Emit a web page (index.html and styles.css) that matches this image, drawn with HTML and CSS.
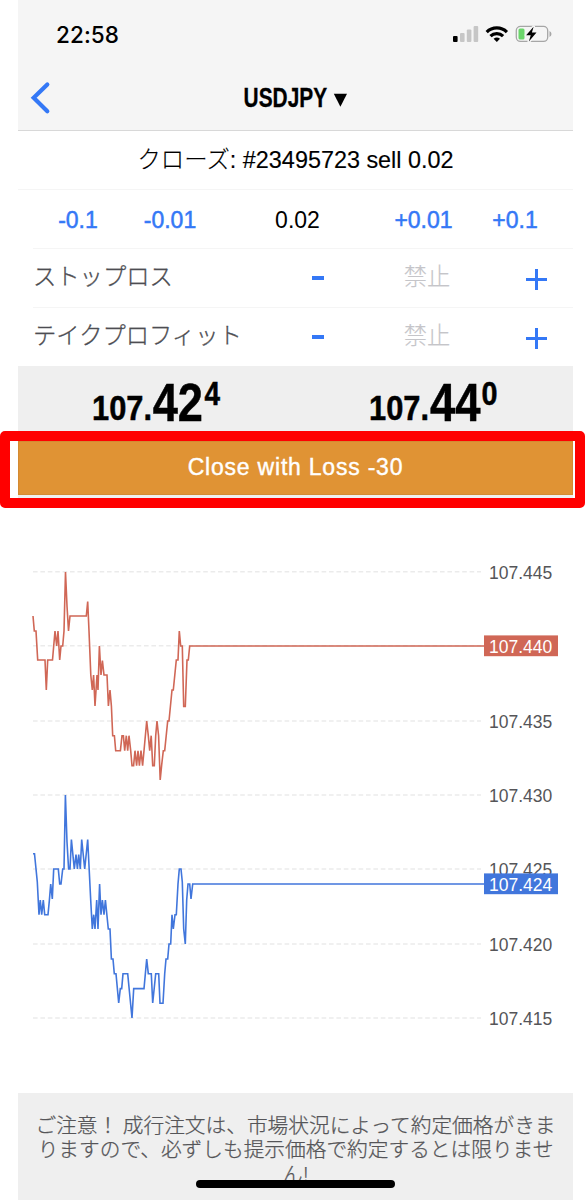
FILE: index.html
```html
<!DOCTYPE html>
<html lang="ja">
<head>
<meta charset="utf-8">
<title>USDJPY</title>
<link rel="stylesheet" href="styles.css">
</head>
<body>
<main class="screen">
  <header class="header">
    <div class="status">
      <span class="time">22:58</span>
      <svg class="status-icons" width="102" height="20" viewBox="450 24 102 20">
        <rect x="453" y="36" width="4.6" height="6" rx="1"/>
        <g fill="#c6c6c6"><rect x="460" y="33" width="4.6" height="9" rx="1"/><rect x="466.8" y="29.6" width="4.6" height="12.4" rx="1"/><rect x="473.6" y="26" width="4.6" height="16" rx="1"/></g>
        <g fill="none" stroke="#000" stroke-width="3.2"><path d="M486.7 32.1a14.3 14.3 0 0 1 20.2 0"/><path d="M490.5 36.2a8.9 8.9 0 0 1 12.6 0"/></g>
        <path d="M493.6 38.8a5.3 5.3 0 0 1 6.4 0l-3.2 3.1z"/>
        <rect x="516.3" y="26.4" width="31.4" height="15" rx="4.2" fill="none" stroke="#a6a6a6" stroke-width="1.3"/>
        <path d="M549.5 31v6q2-1 2-3t-2-3z" fill="#a6a6a6"/>
        <rect x="518.5" y="28.6" width="6" height="10.8" rx="1.5" fill="#6bd66b"/>
        <path d="M533.6 26.8l-7.5 8.4h4.6l-1.8 6.2 7.6-8.8h-4.6z" fill="#000" stroke="#f5f5f5" stroke-width="3" paint-order="stroke" stroke-linejoin="round"/>
      </svg>
    </div>
    <div class="nav">
      <svg class="back" width="24" height="36" viewBox="28 80 24 36"><path d="M47.3 84.5L33.7 97.8 47.3 111.2" fill="none" stroke="#3478f6" stroke-width="4.2" stroke-linecap="round"/></svg>
      <svg class="title" width="110" height="36" viewBox="241 80 110 36">
        <text x="243.6" y="107.4" font-size="27" textLength="83.5" lengthAdjust="spacingAndGlyphs">USDJPY</text>
        <path d="M333.8 93.7h13.2l-6.6 13z"/>
      </svg>
    </div>
  </header>

  <div class="order">クローズ: #23495723 sell 0.02</div>
  <div class="volume">
    <span class="step">-0.1</span><span class="step">-0.01</span><span class="amount">0.02</span><span class="step">+0.01</span><span class="step">+0.1</span>
  </div>
  <div class="level">
    <span class="label">ストップロス</span>
    <i class="minus"></i><span class="value">禁止</span><i class="plus"></i>
  </div>
  <div class="level">
    <span class="label">テイクプロフィット</span>
    <i class="minus"></i><span class="value">禁止</span><i class="plus"></i>
  </div>

  <section class="trade">
    <svg class="prices" width="555" height="75" viewBox="18 366 555 75">
      <g>
        <text x="92" y="420" font-size="35" textLength="60" lengthAdjust="spacingAndGlyphs">107.</text>
        <text x="152.7" y="420.7" font-size="54" textLength="50.3" lengthAdjust="spacingAndGlyphs">42</text>
        <text x="204.5" y="405.3" font-size="33" textLength="15.5" lengthAdjust="spacingAndGlyphs">4</text>
      </g>
      <g>
        <text x="369" y="420" font-size="35" textLength="60" lengthAdjust="spacingAndGlyphs">107.</text>
        <text x="430" y="420.7" font-size="54" textLength="50.5" lengthAdjust="spacingAndGlyphs">44</text>
        <text x="481.5" y="405.3" font-size="33" textLength="16" lengthAdjust="spacingAndGlyphs">0</text>
      </g>
    </svg>
    <div class="close">Close with Loss -30</div>
    <div class="highlight"></div>
  </section>

  <svg class="chart" width="555" height="595" viewBox="18 498 555 595">
    <path class="grid" d="M33 571.7H481M33 645.8H481M33 721H481M33 795H481M33 869H481M33 944H481M33 1018H481"/>
    <g class="axis">
      <text x="489" y="579">107.445</text>
      <text x="489" y="728">107.435</text>
      <text x="489" y="802">107.430</text>
      <text x="489" y="876">107.425</text>
      <text x="489" y="951">107.420</text>
      <text x="489" y="1025">107.415</text>
    </g>
    <polyline class="line ask" points="33,616 34.3,631 36,631 37.7,660 45,660 46.3,690 47.7,660 52.5,660 55,631 56.7,646 58,631 59.7,660 61,646 62.7,646 64,631 65.5,572 67,606 68.5,631 70,616 86.3,616 87.7,601.5 89,631 90.8,675 92.3,690 93.6,675 95,706 97,675 98,690 99.4,646 101,675 102.4,660.5 104,675 107,675 108.4,706 110,690 111.4,706 112.7,735.7 114.4,735.7 115.7,750.7 120.4,750.7 122,735.7 123.4,735.7 124.7,750.7 126.3,735.7 127.7,750.7 129,735.7 130.7,750.7 132,765.6 133.6,765.6 135,750.7 136.6,765.6 138,750.7 139.4,765.6 141,750.7 142.6,765.6 144,750.7 146.7,721 148.3,735.7 149.7,750.7 151.2,735.7 152.7,765.6 154.3,765.6 155.7,735.7 157,721 158.6,735.7 160.2,780 161.6,765.6 163.3,750.7 164.7,750.7 167.7,721 169,721 172,690 173.3,690 176.3,660 178,660 179.3,631 180.7,646 182.3,646 183.7,706.5 185.3,706.5 187,660 188.3,660 189.7,646 484,646"/>
    <polyline class="line bid" points="33,853.7 34.5,853.7 37.3,882 39,914.7 40.3,900 41.7,914.7 43.3,900 44.7,914.7 48,914.7 49.4,900 50.7,884 52.3,899 53.7,869 58.3,869 59.7,884 61,884 62.7,869 64,869 65.4,795 67,842 68.6,869 70,869 71.4,839.5 74.3,869 76,854.5 77.4,869 78.7,854.5 80.3,869 81.7,839.5 84.7,869 87.7,839.5 90.7,900 92.3,929 93.7,914.7 95,929 96.7,900 98,929 99.6,884 101,914.7 102.4,900 104,914.7 105.4,900 108.3,929 110,929 111.4,959 113,959 114.3,973.7 116,973.7 118.7,1003 120.3,988.6 121.7,988.6 123,973.7 127.7,973.7 132,1018 133.7,988.6 144,988.6 146.7,959 148.3,973.7 151.3,973.7 152.7,1003 155.7,973.7 158.7,973.7 160,1003.3 163,1003.3 164.7,973.7 166,959 167.7,959 169,944 170.7,944 172,914.7 173.3,929 175,914.7 176.3,914.7 178,884 179.3,869 181,869 182.3,882 183.7,929 185.3,944 186.7,900 188,884 189.7,884 191,899 192.7,884 484,884"/>
    <rect x="484" y="635.4" width="74" height="20.8" fill="#d06756"/>
    <rect x="484" y="873.4" width="74" height="20.8" fill="#4176dc"/>
    <g class="axis tag">
      <text x="489" y="653">107.440</text>
      <text x="489" y="891">107.424</text>
    </g>
  </svg>

  <footer class="notice">
    <p>ご注意！ 成行注文は、市場状況によって約定価格がきま<br>りますので、必ずしも提示価格で約定するとは限りませ<br>ん!</p>
    <div class="home"></div>
  </footer>
</main>
</body>
</html>
```
FILE: styles.css
```css
* { box-sizing: border-box; }
body {
  margin: 0;
  background: #fff;
  font-family: "Liberation Sans", "Noto Sans CJK JP", sans-serif;
}
.screen { width: 555px; height: 1200px; margin-left: 18px; }
.header { height: 131px; background: #f5f5f5; border-bottom: 1px solid #d8d8d8; }
.status {
  height: 68px;
  padding: 0 21px 0 38px;
  display: flex;
  align-items: center;
  justify-content: space-between;
}
.time { font: 500 22.5px Inter, sans-serif; letter-spacing: .1px; }
.nav { display: flex; padding: 12px 0 0 10px; }
.title { margin-left: 189px; font-weight: 700; stroke: #000; stroke-width: .3px; }
.title path { stroke: none; }
.order, .level { height: 59px; border-bottom: 1px solid #f5f5f5; line-height: 58px; }
.order { text-align: center; font-size: 23.4px; font-weight: 300; -webkit-text-stroke: .15px #000; line-height: 59px; }
.volume {
  display: grid;
  grid-template-columns: 92px 92px 163px 89px 94px;
  height: 58px;
  padding-left: 14px;
  font-size: 23px;
  text-align: center;
  line-height: 61px;
}
.step { color: #3478f6; -webkit-text-stroke: .5px #3478f6; }
.level {
  display: grid;
  grid-template-columns: 260px 49px 25px 120px 13px 72px;
  margin-left: 15px;
  border-width: 1px 0 0;
  border-top: 1px solid #f5f5f5;
  font-size: 23.3px;
  font-weight: 300;
  line-height: 56px;
}
.label { grid-column: 1; color: #4d4d52; -webkit-text-stroke: .3px #4d4d52; }
.value { grid-column: 4; color: #c5c5c9; text-align: center; -webkit-text-stroke: .2px #c5c5c9; }
.minus, .plus { place-self: center; }
.minus { grid-column: 2; width: 12px; height: 4px; margin-bottom: 0; background: #3478f6; }
.plus {
  grid-column: 6;
  width: 21px;
  height: 21px;
  margin-top: 2px;
  background: linear-gradient(#3478f6, #3478f6) center / 21px 3px no-repeat, linear-gradient(#3478f6, #3478f6) center / 3px 21px no-repeat;
}
.trade { position: relative; height: 132px; background: #efefef; }
.prices { display: block; font-weight: 700; stroke: #000; stroke-width: .5px; }
.close {
  height: 54px;
  border: 1px solid #d48a32;
  background: #e09334;
  color: #fff;
  font-size: 23px;
  letter-spacing: .78px;
  line-height: 51px;
  text-align: center;
  -webkit-text-stroke: .4px #fff;
}
.highlight { position: absolute; left: -18px; top: 65px; width: 585px; height: 77px; border: 10px solid #f00; border-radius: 5px; }
.chart { display: block; }
.grid { fill: none; stroke: #ebebeb; stroke-width: 1.4; stroke-dasharray: 4.6 2.8; }
.axis { font-size: 17.5px; fill: #555558; }
.axis.tag { fill: #fff; }
.line { fill: none; stroke-width: 1.6; stroke-linejoin: miter; }
.ask { stroke: #d06756; }
.bid { stroke: #4176dc; }
.notice { position: relative; height: 107px; background: #efefef; padding-top: 19px; }
.notice p {
  margin: 0;
  color: #555558;
  font: 300 20.7px/24.4px "Noto Sans CJK JP", sans-serif;
  text-align: center;
  white-space: nowrap;
  -webkit-text-stroke: .25px #555558;
}
.home { position: absolute; left: 178px; top: 87px; width: 199px; height: 8px; border-radius: 4px; background: #000; }
```
